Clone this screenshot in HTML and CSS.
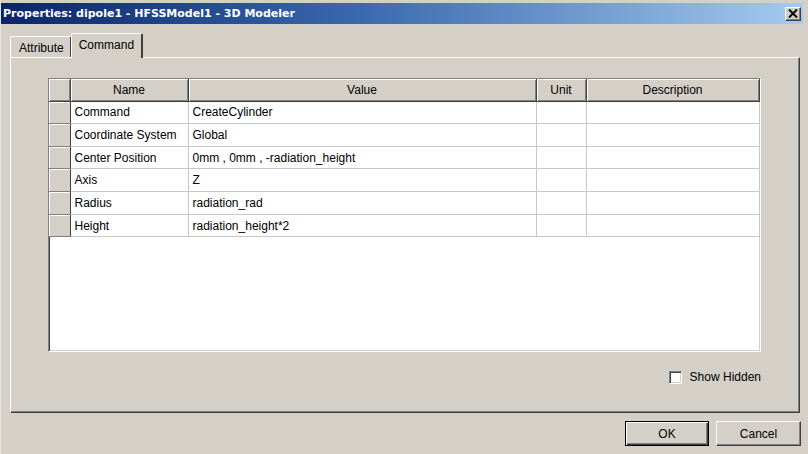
FILE: index.html
```html
<!DOCTYPE html>
<html>
<head>
<meta charset="utf-8">
<link rel="stylesheet" href="styles.css">
</head>
<body>
<div class="window">
  <div class="titlebar">
    <span class="title">Properties: dipole1 - HFSSModel1 - 3D Modeler</span>
    <span class="close"><svg width="10" height="9" viewBox="0 0 10 9"><path d="M1 0.5 L9 8.5 M9 0.5 L1 8.5" stroke="#000" stroke-width="2"/></svg></span>
  </div>
  <div class="tabs">
    <div class="tab">Attribute</div>
    <div class="tab active">Command</div>
  </div>
  <div class="panel">
    <div class="grid">
      <table>
        <colgroup>
          <col class="c-rh"><col class="c-name"><col class="c-value"><col class="c-unit"><col class="c-desc">
        </colgroup>
        <thead>
          <tr><th class="rh"></th><th>Name</th><th>Value</th><th>Unit</th><th>Description</th></tr>
        </thead>
        <tbody>
          <tr><td class="rh"></td><td>Command</td><td>CreateCylinder</td><td></td><td></td></tr>
          <tr><td class="rh"></td><td>Coordinate System</td><td>Global</td><td></td><td></td></tr>
          <tr><td class="rh"></td><td>Center Position</td><td>0mm , 0mm , -radiation_height</td><td></td><td></td></tr>
          <tr><td class="rh"></td><td>Axis</td><td>Z</td><td></td><td></td></tr>
          <tr><td class="rh"></td><td>Radius</td><td>radiation_rad</td><td></td><td></td></tr>
          <tr><td class="rh"></td><td>Height</td><td>radiation_height*2</td><td></td><td></td></tr>
        </tbody>
      </table>
    </div>
    <div class="options">
      <label class="check"><span class="box"></span>Show Hidden</label>
    </div>
  </div>
  <div class="buttons">
    <div class="btn default">OK</div>
    <div class="btn">Cancel</div>
  </div>
</div>
</body>
</html>
```
FILE: styles.css
```css
html, body {
  margin: 0;
  padding: 0;
  background: #d4d0c8;
}
body {
  font-family: "Liberation Sans", Arial, sans-serif;
  font-size: 12px;
  color: #000;
}
.window {
  width: 808px;
  height: 454px;
  box-sizing: border-box;
  padding-top: 3px;
  background: #d4d0c8;
  border-left: 1px solid #e8e6e0;
  overflow: hidden;
}
.titlebar {
  height: 21px;
  margin: 0 5px 0 0;
  padding: 0 2px 0 2px;
  display: flex;
  align-items: center;
  justify-content: space-between;
  background: linear-gradient(to right, #0a246a 0%, #3a6aae 45%, #a6caf0 100%);
}
.title {
  color: #fff;
  font-family: "DejaVu Sans", Verdana, sans-serif;
  font-weight: bold;
  font-size: 11px;
}
.close {
  width: 16px;
  height: 14px;
  box-sizing: border-box;
  background: #d4d0c8;
  border-top: 1px solid #fff;
  border-left: 1px solid #fff;
  border-right: 1px solid #404040;
  border-bottom: 1px solid #404040;
  box-shadow: inset -1px -1px 0 #808080;
  display: flex;
  align-items: center;
  justify-content: center;
}
.tabs {
  margin-top: 9px;
  padding-left: 9px;
  height: 24px;
  display: flex;
  align-items: flex-end;
  position: relative;
  z-index: 1;
}
.tab {
  height: 21px;
  box-sizing: border-box;
  padding: 4px 6px 0 8px;
  border-top: 1px solid #fff;
  border-left: 1px solid #fff;
  border-right: 1px solid #404040;
  border-radius: 2px 2px 0 0;
  background: #d4d0c8;
}
.tab.active {
  height: 25px;
  margin-bottom: -1px;
  padding: 4px 7px 0 7px;
  border-right: 2px solid #404040;
}
.panel {
  margin: 0 8px 0 9px;
  height: 356px;
  box-sizing: border-box;
  border-top: 1px solid #fff;
  border-left: 1px solid #fff;
  border-right: 1px solid #404040;
  border-bottom: 1px solid #404040;
  box-shadow: inset -1px -1px 0 #808080;
  padding: 20px 38px 0 37px;
}
.grid {
  height: 274px;
  box-sizing: border-box;
  background: #fff;
  border-top: 1px solid #808080;
  border-left: 1px solid #808080;
  border-right: 1px solid #fff;
  border-bottom: 1px solid #fff;
  box-shadow: inset 1px 1px 0 #404040, inset -1px -1px 0 #d4d0c8;
  padding: 0 1px 1px 0;
}
table {
  border-collapse: collapse;
  table-layout: fixed;
  width: 710px;
}
.c-rh { width: 21px; }
.c-name { width: 118px; }
.c-value { width: 348px; }
.c-unit { width: 50px; }
.c-desc { width: 173px; }
th {
  height: 22px;
  box-sizing: border-box;
  padding: 0;
  font-weight: normal;
  text-align: center;
  background: #d4d0c8;
  border-right: 1px solid #404040;
  border-bottom: 1px solid #404040;
  box-shadow: inset 1px 1px 0 #fff, inset -1px -1px 0 #808080;
}
td {
  height: 22.67px;
  box-sizing: border-box;
  padding: 0 0 0 4px;
  border-right: 1px solid #c8c8c8;
  border-bottom: 1px solid #c8c8c8;
  white-space: nowrap;
  overflow: hidden;
}
td.rh {
  padding: 0;
  background: #d4d0c8;
  border-right: 1px solid #404040;
  border-bottom: 1px solid #808080;
  box-shadow: inset 1px 1px 0 #fff;
}
.options {
  margin-top: 18px;
  display: flex;
  justify-content: flex-end;
  padding-right: 0;
}
.check {
  display: flex;
  align-items: center;
  gap: 8px;
}
.box {
  width: 13px;
  height: 13px;
  box-sizing: border-box;
  background: #fff;
  border-top: 1px solid #808080;
  border-left: 1px solid #808080;
  border-right: 1px solid #fff;
  border-bottom: 1px solid #fff;
  box-shadow: inset 1px 1px 0 #404040, inset -1px -1px 0 #d4d0c8;
}
.buttons {
  margin-top: 8px;
  padding-right: 7px;
  display: flex;
  justify-content: flex-end;
  gap: 7px;
}
.btn {
  width: 85px;
  height: 25px;
  box-sizing: border-box;
  display: flex;
  align-items: center;
  justify-content: center;
  background: #d4d0c8;
  border-top: 1px solid #fff;
  border-left: 1px solid #fff;
  border-right: 1px solid #404040;
  border-bottom: 1px solid #404040;
  box-shadow: inset -1px -1px 0 #808080;
}
.btn.default {
  width: 84px;
  border: 1px solid #000;
  box-shadow: inset 1px 1px 0 #fff, inset -1px -1px 0 #404040, inset -2px -2px 0 #808080;
}
```
